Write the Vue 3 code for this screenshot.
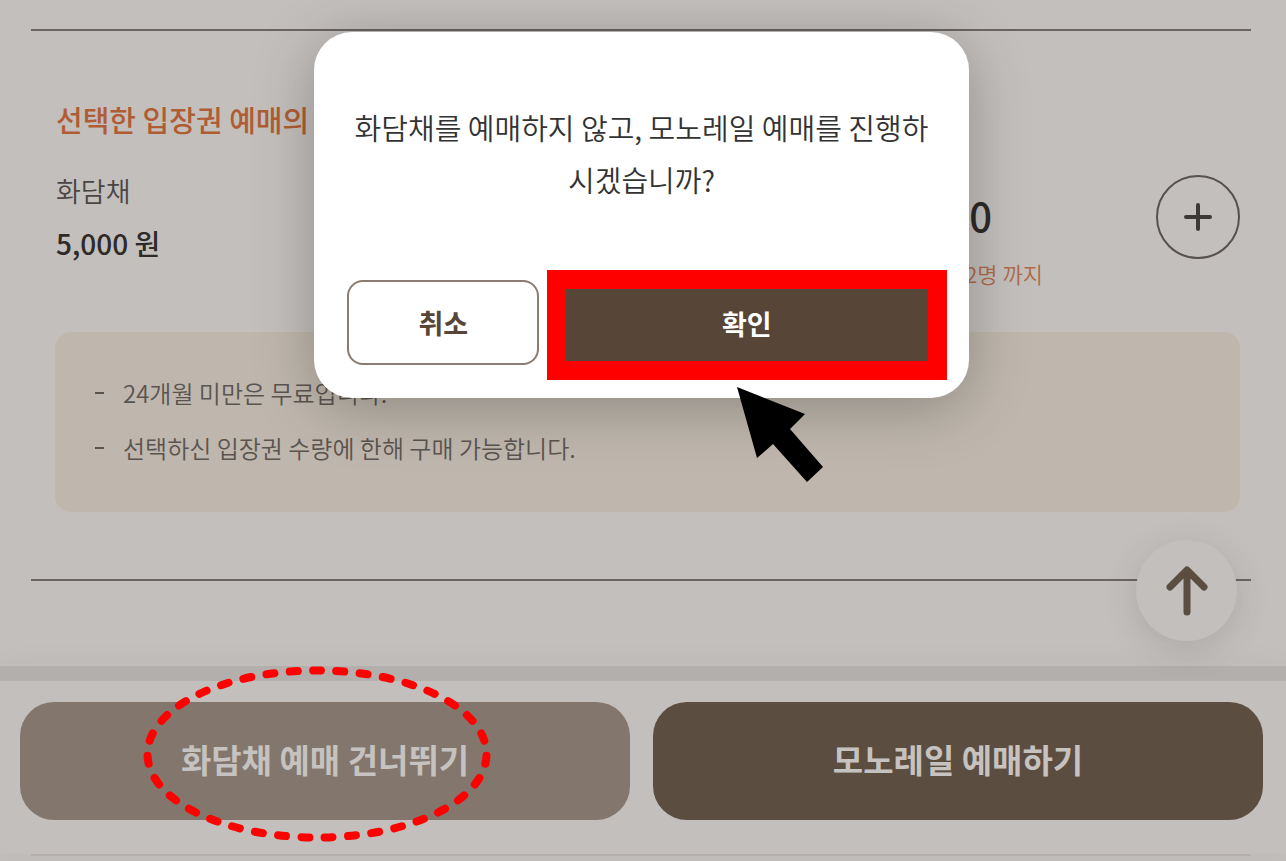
<script setup>
import { ref } from 'vue'

const count = ref(0)
const notes = [
  '24개월 미만은 무료입니다.',
  '선택하신 입장권 수량에 한해 구매 가능합니다.',
]
</script>

<template>
  <div class="page">
    <main class="ticket">
      <h2 class="title">선택한 입장권 예매의</h2>

      <div class="product">
        <div class="info">
          <span class="name">화담채</span>
          <strong class="price">5,000 원</strong>
        </div>
        <div class="quantity">
          <div class="amount">
            <output class="count">{{ count }}</output>
            <span class="limit">2명 까지</span>
          </div>
          <button class="plus" type="button" aria-label="수량 추가" @click="count++">
            <svg viewBox="0 0 28 28" aria-hidden="true">
              <path d="M14 2v24M2 14h24" />
            </svg>
          </button>
        </div>
      </div>

      <ul class="notes">
        <li v-for="note in notes" :key="note">{{ note }}</li>
      </ul>

      <button class="to-top" type="button" aria-label="맨 위로">
        <svg viewBox="0 0 42 52" aria-hidden="true">
          <path d="M21 47V6M4 22L21 5L38 22" />
        </svg>
      </button>
    </main>

    <footer class="actions">
      <div class="skip-wrap">
        <button class="action skip" type="button">화담채 예매 건너뛰기</button>
        <svg class="ring" viewBox="0 0 348 176" aria-hidden="true">
          <path
            d="M174 4.500A169.500 83.500 0 0 1 174 171.500A169.500 83.500 0 0 1 174 4.500"
            pathLength="350"
          />
        </svg>
      </div>
      <button class="action next" type="button">모노레일 예매하기</button>
    </footer>
    <hr class="end-line" />

    <div class="overlay">
      <section class="dialog" role="dialog" aria-modal="true" aria-labelledby="message">
        <p id="message" class="message">
          화담채를 예매하지 않고, 모노레일 예매를 진행하<br />시겠습니까?
        </p>
        <div class="choices">
          <button class="cancel" type="button">취소</button>
          <div class="confirm-wrap">
            <button class="confirm" type="button">확인</button>
            <svg class="pointer" viewBox="0 0 86 95" aria-hidden="true">
              <path d="M0 0L68 27L53 42L86 80L70 95L36 57L20 71Z" />
            </svg>
          </div>
        </div>
      </section>
    </div>
  </div>
</template>

<style>
body {
  margin: 0;
  background: #c3bfbc;
}
</style>

<style scoped>
.page {
  position: relative;
  min-height: 100vh;
  overflow: hidden;
  box-sizing: border-box;
  background: #c3bfbc;
  color: #2d2a28;
  font-family: "Noto Sans CJK KR", "Noto Sans", sans-serif;
}

button {
  padding: 0;
  border: 0;
  font-family: inherit;
  cursor: pointer;
}

.ticket {
  position: relative;
  margin: 29px 35px 0 31px;
  padding: 68px 11px 67px 25px;
  border-top: 2px solid #6a6562;
  border-bottom: 2px solid #6a6562;
}

.title {
  margin: 0 0 32px;
  color: #b05c34;
  font-size: 29px;
  font-weight: 500;
  line-height: 40px;
}

.product {
  display: flex;
  justify-content: space-between;
  margin-bottom: 29px;
}

.info {
  display: flex;
  flex-direction: column;
  gap: 12px;
}

.name {
  color: #4b4643;
  font-size: 27px;
  font-weight: 350;
  line-height: 40px;
}

.price {
  font-size: 28px;
  font-weight: 500;
  line-height: 40px;
}

.quantity {
  display: flex;
  gap: 113px;
  padding-top: 4px;
}

.amount {
  display: flex;
  flex-direction: column;
  padding-top: 12px;
}

.count {
  padding-left: 4px;
  font-size: 40px;
  font-weight: 500;
  line-height: 56px;
}

.limit {
  color: #b0694a;
  font-size: 22px;
  font-weight: 350;
  line-height: 60px;
  white-space: nowrap;
}

.plus {
  display: flex;
  align-items: center;
  justify-content: center;
  width: 84px;
  height: 84px;
  border: 2px solid #56514e;
  border-radius: 50%;
  background: transparent;
}

.plus svg {
  width: 28px;
  height: 28px;
  fill: none;
  stroke: #3d3936;
  stroke-width: 4;
  stroke-linecap: round;
}

.notes {
  margin: 0 0 0 -1px;
  padding: 33px 40px 37px;
  border-radius: 16px;
  background: #bfb7ad;
  color: #5a5450;
  font-size: 24px;
  font-weight: 350;
  line-height: 55px;
  list-style: none;
}

.notes li {
  display: flex;
}

.notes li::before {
  content: "";
  flex: none;
  align-self: center;
  width: 9px;
  height: 2px;
  margin-right: 19px;
  background: #5a5450;
}

.to-top {
  position: absolute;
  right: 14px;
  bottom: -62px;
  display: flex;
  align-items: center;
  justify-content: center;
  width: 101px;
  height: 101px;
  border-radius: 50%;
  background: #c3bfbc;
  box-shadow: 0 8px 36px rgba(0, 0, 0, 0.12);
}

.to-top svg {
  width: 42px;
  height: 52px;
  fill: none;
  stroke: #5c4d41;
  stroke-width: 7;
  stroke-linecap: round;
  stroke-linejoin: round;
}

.actions {
  display: flex;
  gap: 23px;
  margin-top: 85px;
  padding: 21px 23px 34px 20px;
  border-top: 15px solid #b3afac;
  box-shadow: 0 0 30px rgba(0, 0, 0, 0.04);
}

.skip-wrap {
  position: relative;
  display: flex;
  flex: 1;
}

.action {
  flex: 1;
  height: 118px;
  padding-bottom: 4px;
  border-radius: 34px;
  color: #c6c2bf;
  font-size: 33px;
  font-weight: 700;
}

.skip {
  background: #83776d;
}

.next {
  background: #5c4d41;
}

.ring {
  position: absolute;
  top: -36px;
  left: 123px;
  width: 348px;
  height: 176px;
  fill: none;
  stroke: #ff0000;
  stroke-width: 8;
  stroke-linecap: round;
  stroke-dasharray: 3.4 6.6;
  stroke-dashoffset: 1.7;
  pointer-events: none;
}

.end-line {
  margin: 0 35px 0 31px;
  border: 0;
  border-top: 2px solid #b4afad;
}

.overlay {
  position: absolute;
  inset: 0;
  display: flex;
  align-items: flex-start;
  justify-content: center;
  padding: 32px 3px 0 0;
}

.dialog {
  box-sizing: border-box;
  width: 51%;
  padding: 69px 22px 18px 33px;
  border-radius: 38px;
  background: #ffffff;
  box-shadow: 0 10px 60px rgba(0, 0, 0, 0.26);
}

.message {
  margin: 0 0 65px;
  padding-right: 11px;
  color: #333333;
  font-size: 29px;
  font-weight: 350;
  line-height: 52px;
  text-align: center;
  white-space: nowrap;
}

.choices {
  display: grid;
  grid-template-columns: 12fr 25fr;
  align-items: start;
  gap: 8px;
}

.cancel {
  box-sizing: border-box;
  height: 85px;
  margin-top: 10px;
  border: 2px solid #8a7c71;
  border-radius: 16px;
  background: #ffffff;
  color: #574538;
  font-size: 27px;
  font-weight: 700;
}

.confirm-wrap {
  position: relative;
  display: flex;
}

.confirm {
  flex: 1;
  box-sizing: border-box;
  height: 110px;
  padding-bottom: 4px;
  border: 19px solid #ff0000;
  background: #574538;
  color: #ffffff;
  font-size: 27px;
  font-weight: 700;
}

.pointer {
  position: absolute;
  top: 117px;
  left: 190px;
  width: 86px;
  height: 95px;
  fill: #000000;
}
</style>
